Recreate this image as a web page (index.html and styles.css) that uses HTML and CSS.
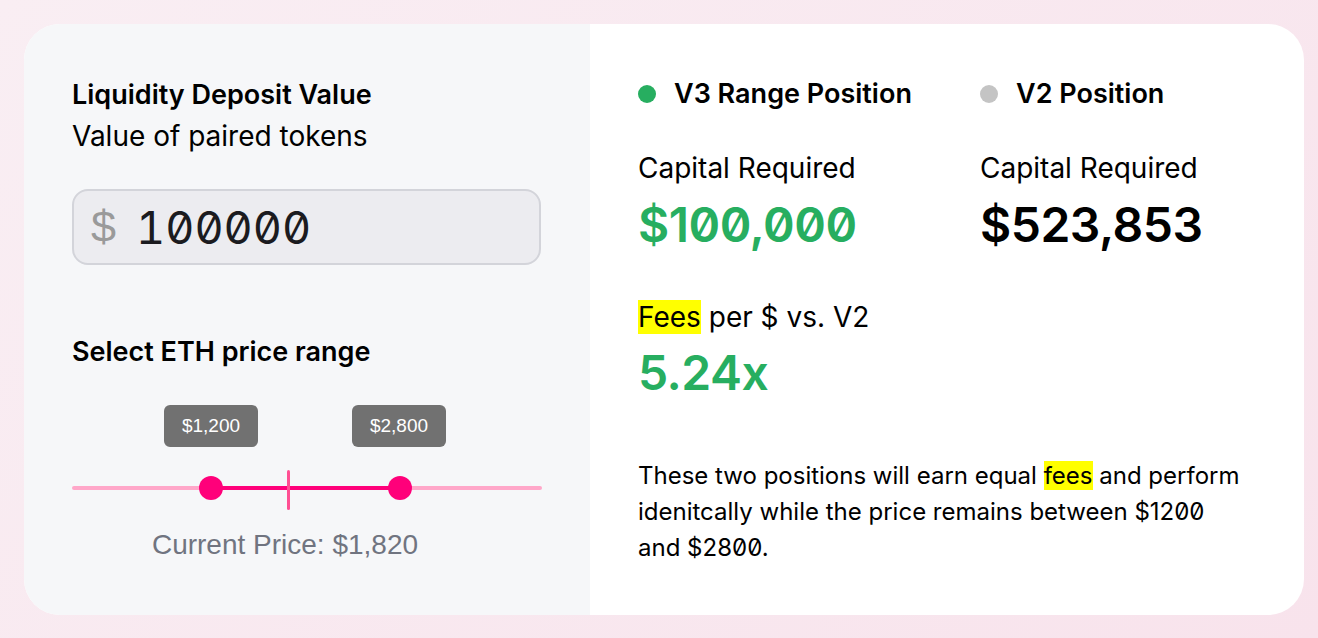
FILE: index.html
```html
<!DOCTYPE html>
<html lang="en">
<head>
  <meta charset="UTF-8">
  <title>V3 vs V2 Capital</title>
  <link rel="stylesheet" href="styles.css">
</head>
<body>
  <div class="card">
    <div class="inputs">
      <h3>Liquidity Deposit Value</h3>
      <p class="sub">Value of paired tokens</p>

      <div class="amount">
        <span class="amount-sign">$</span>
        <span class="amount-value">100000</span>
      </div>

      <h3 class="range-title">Select ETH price range</h3>

      <div class="slider">
        <div class="tip tip-low">$1,200</div>
        <div class="tip tip-high">$2,800</div>
        <div class="track"></div>
        <div class="track-active"></div>
        <div class="current"></div>
        <div class="thumb thumb-low"></div>
        <div class="thumb thumb-high"></div>
      </div>
      <p class="current-price">Current Price: $1,820</p>
    </div>

    <div class="results">
      <div class="cols">
        <div class="col">
          <div class="legend"><span class="dot green"></span>V3 Range Position</div>
          <p class="label">Capital Required</p>
          <p class="big green-text">$100,000</p>
        </div>
        <div class="col">
          <div class="legend"><span class="dot grey"></span>V2 Position</div>
          <p class="label">Capital Required</p>
          <p class="big">$523,853</p>
        </div>
      </div>

      <p class="label fees-label"><mark>Fees</mark> per $ vs. V2</p>
      <p class="big ratio green-text">5.24x</p>

      <p class="note">These two positions will earn equal <mark>fees</mark> and perform idenitcally while the price remains between $1200 and $2800.</p>
    </div>
  </div>
</body>
</html>
```

FILE: styles.css
```css
* {
  margin: 0;
  padding: 0;
  box-sizing: border-box;
}

body {
  font-family: 'Inter', 'Noto Sans', sans-serif;
  font-feature-settings: 'zero' 1;
  background: linear-gradient(135deg, #f9eef3, #f8e3ec);
  min-height: 100vh;
  padding: 24px;
  color: #000;
}

.card {
  display: grid;
  grid-template-columns: 566px 1fr;
  width: 1280px;
  height: 591px;
  border-radius: 36px;
  overflow: hidden;
  background: #fff;
}

/* left side */
.inputs {
  background: #f6f7f9;
  padding: 55px 48px 0 48px;
}

h3 {
  font-size: 27px;
  font-weight: 600;
  line-height: 32px;
}

.sub {
  font-size: 28px;
  line-height: 34px;
  margin-top: 8px;
}

.amount {
  margin-top: 36px;
  width: 469px;
  height: 76px;
  background: #ececf0;
  border: 2px solid #d3d4da;
  border-radius: 16px;
  display: flex;
  align-items: center;
  padding-left: 17px;
}

.amount-sign {
  font-family: 'Liberation Sans', sans-serif;
  font-size: 45px;
  color: #9a9a9a;
  margin-right: 20px;
}

.amount-value {
  font-size: 45px;
  font-feature-settings: 'zero' 1, 'tnum' 1;
  color: #1b1b1f;
}

.range-title {
  margin-top: 71px;
}

.slider {
  position: relative;
  height: 146px;
}

.tip {
  position: absolute;
  top: 37px;
  width: 94px;
  height: 42px;
  background: #717171;
  border-radius: 6px;
  color: #fff;
  font-family: 'Liberation Sans', sans-serif;
  font-size: 19px;
  display: flex;
  align-items: center;
  justify-content: center;
}

.tip-low { left: 92px; }
.tip-high { left: 280px; }

.track {
  position: absolute;
  left: 0;
  right: 0;
  top: 118px;
  height: 4px;
  border-radius: 2px;
  background: #ffa7c9;
}

.track-active {
  position: absolute;
  left: 139px;
  width: 189px;
  top: 118px;
  height: 4px;
  background: #ff007a;
}

.current {
  position: absolute;
  left: 215px;
  top: 102px;
  width: 3px;
  height: 40px;
  background: #ff4f93;
  border-radius: 2px;
}

.thumb {
  position: absolute;
  top: 108px;
  width: 24px;
  height: 24px;
  border-radius: 50%;
  background: #ff007a;
}

.thumb-low { left: 127px; }
.thumb-high { left: 316px; }

.current-price {
  font-family: 'Liberation Sans', sans-serif;
  font-size: 28px;
  line-height: 34px;
  color: #707480;
  width: 426px;
  text-align: center;
  margin-top: 14px;
}

/* right side */
.results {
  padding: 53px 48px 0 48px;
}

.cols {
  display: grid;
  grid-template-columns: 342px 1fr;
}

.legend {
  display: flex;
  align-items: center;
  font-size: 27px;
  font-weight: 600;
  line-height: 34px;
}

.dot {
  width: 18px;
  height: 18px;
  border-radius: 50%;
  margin-right: 18px;
}

.dot.green { background: #27ae60; }
.dot.grey { background: #c4c4c4; }

.label {
  font-size: 28px;
  line-height: 34px;
  margin-top: 40px;
}

.big {
  font-size: 48px;
  font-weight: 600;
  line-height: 58px;
  letter-spacing: -0.01em;
  margin-top: 11px;
}

.green-text {
  color: #27ae60;
}

.fees-label {
  margin-top: 46px;
}

.ratio {
  margin-top: 10px;
}

mark {
  background: #ffff00;
  color: inherit;
}

.note {
  font-size: 24px;
  line-height: 36px;
  margin-top: 56px;
  max-width: 604px;
}
```
